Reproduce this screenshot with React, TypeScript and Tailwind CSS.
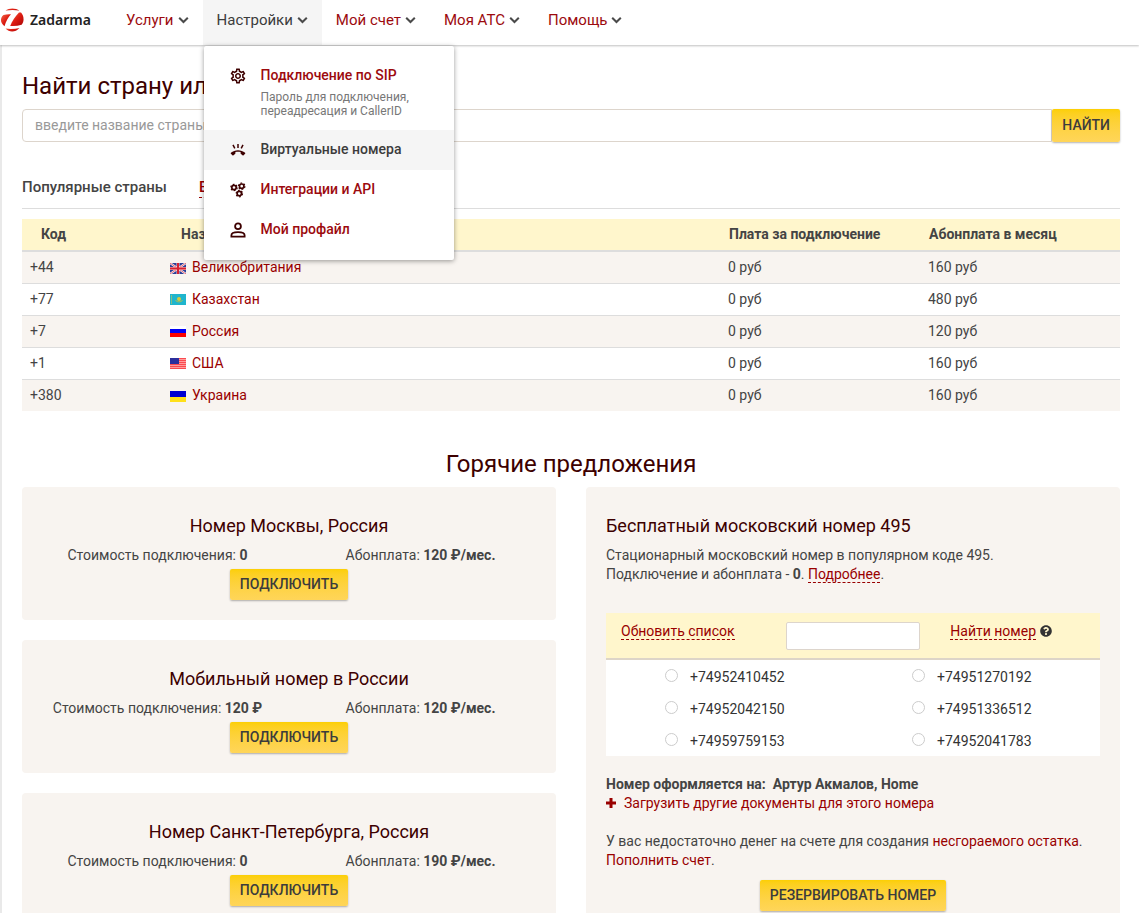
import { useState, type ReactNode } from "react";
import { FaQuestionCircle } from "react-icons/fa";
import { MdOutlineSettings } from "react-icons/md";

const NAV = ["Услуги", "Настройки", "Мой счет", "Моя АТС", "Помощь"];

const COUNTRIES = [
  { code: "+44", flag: "gb", name: "Великобритания", setup: "0 руб", monthly: "160 руб" },
  { code: "+77", flag: "kz", name: "Казахстан", setup: "0 руб", monthly: "480 руб" },
  { code: "+7", flag: "ru", name: "Россия", setup: "0 руб", monthly: "120 руб" },
  { code: "+1", flag: "us", name: "США", setup: "0 руб", monthly: "160 руб" },
  { code: "+380", flag: "ua", name: "Украина", setup: "0 руб", monthly: "160 руб" },
];

const OFFERS = [
  { title: "Номер Москвы, Россия", setup: "0", monthly: "120 ₽/мес." },
  { title: "Мобильный номер в России", setup: "120 ₽", monthly: "120 ₽/мес." },
  { title: "Номер Санкт-Петербурга, Россия", setup: "0", monthly: "190 ₽/мес." },
];

const NUMBERS = [
  "+74952410452",
  "+74951270192",
  "+74952042150",
  "+74951336512",
  "+74959759153",
  "+74952041783",
];

function Logo() {
  return (
    <svg viewBox="0 0 24 24" className="h-6 w-6 shrink-0" aria-hidden="true">
      <defs>
        <linearGradient id="logo-red" x1="0" y1="0" x2="1" y2="1">
          <stop offset="0" stopColor="#f4694a" />
          <stop offset="0.5" stopColor="#dd1c12" />
          <stop offset="1" stopColor="#a80505" />
        </linearGradient>
      </defs>
      <path d="M5.5 2.600C9-.2 15.500-.2 19.500 2.600C15 1.800 10 1.800 5.500 2.600Z" fill="url(#logo-red)" />
      <path d="M3.500 7C6 6.200 8.500 6 11 6.200C8.500 9 6 13 4.500 18.200C.2 15-.2 10 3.500 7Z" fill="url(#logo-red)" />
      <path d="M19 4.400C15.500 8 12 13 10.200 17.900C14 18.300 18 17.900 21.600 16.800C24.500 13 24 8 21 4.600Z" fill="url(#logo-red)" />
      <path d="M5.500 20.600C10.500 21.300 15 21 19.500 19.900C15.500 24.400 9.500 24.600 5.500 20.600Z" fill="url(#logo-red)" />
    </svg>
  );
}

function Chevron() {
  return (
    <svg viewBox="0 0 11 8" className="h-2 w-[11px]" fill="none" aria-hidden="true">
      <path d="M1.200 1.700L5.500 6L9.800 1.700" stroke="#4a4a4a" strokeWidth="2" />
    </svg>
  );
}

function RingIcon() {
  return (
    <svg viewBox="0 0 18 18" className="h-[18px] w-[18px]" aria-hidden="true">
      <path
        d="M9 9.200C6.300 9.200 3.900 10 1.900 11.800C1.600 12.100 1.600 12.500 1.900 12.800L3.400 14.300C3.700 14.600 4.100 14.600 4.500 14.300L6 13.100C6.300 12.900 6.400 12.600 6.400 12.200V11.100C8.100 10.600 9.900 10.600 11.600 11.100V12.200C11.600 12.600 11.700 12.900 12 13.100L13.500 14.300C13.900 14.600 14.300 14.600 14.600 14.300L16.100 12.800C16.400 12.500 16.400 12.100 16.100 11.800C14.100 10 11.700 9.200 9 9.200Z"
        fill="#3d0000"
      />
      <path d="M9 3V7M4 3.800L5.800 7.300M14 3.800L12.200 7.300" stroke="#3d0000" strokeWidth="1.500" />
    </svg>
  );
}

function GearsIcon() {
  const gears = [
    [5, 6.500],
    [12.700, 5.200],
    [10.300, 12.600],
  ];
  return (
    <svg viewBox="0 0 18 18" className="h-[18px] w-[18px]" fill="none" aria-hidden="true">
      {gears.map(([x, y]) => (
        <g key={x} stroke="#3d0000">
          <circle cx={x} cy={y} r="2.200" strokeWidth="1.700" />
          <circle cx={x} cy={y} r="3.200" strokeWidth="1.200" strokeDasharray="1.700 1.650" />
        </g>
      ))}
    </svg>
  );
}

function PersonIcon() {
  return (
    <svg viewBox="0 0 18 18" className="h-[18px] w-[18px]" fill="none" stroke="#3d0000" strokeWidth="1.800" aria-hidden="true">
      <circle cx="9" cy="5.200" r="2.900" />
      <path d="M2.400 15.600V14.200C2.400 12 6 11.100 9 11.100C12 11.100 15.600 12 15.600 14.200V15.600Z" />
    </svg>
  );
}

function Flag({ code }: { code: string }) {
  return (
    <svg viewBox="0 0 16 11" className="mr-1.5 inline-block h-[11px] w-4" aria-hidden="true">
      {code === "gb" && (
        <>
          <rect width="16" height="11" fill="#2b3f98" />
          <path d="M0 0L16 11M16 0L0 11" stroke="#fff" strokeWidth="2" />
          <path d="M0 0L16 11M16 0L0 11" stroke="#d8202f" strokeWidth="0.700" />
          <path d="M8 0V11M0 5.500H16" stroke="#f3c9cf" strokeWidth="3" />
          <path d="M8 0V11M0 5.500H16" stroke="#d8202f" strokeWidth="2" />
        </>
      )}
      {code === "kz" && (
        <>
          <rect width="16" height="11" fill="#1fb5cd" />
          <path d="M1.500 1V10" stroke="#7fbf8a" />
          <circle cx="9" cy="5" r="2" fill="#d8c93a" />
          <path d="M5.500 6C6.500 8.500 11.500 8.500 12.500 6" stroke="#a9bf55" fill="none" />
        </>
      )}
      {code === "ru" && (
        <>
          <rect width="16" height="4" fill="#fff" />
          <rect y="3" width="16" height="4" fill="#0000f5" />
          <rect y="7" width="16" height="4" fill="#fb0000" />
        </>
      )}
      {code === "us" && (
        <>
          <rect width="16" height="11" fill="#ff9c9c" />
          <path d="M0 .5H16M0 2.500H16M0 4.500H16M0 6.500H16M0 8.500H16M0 10.500H16" stroke="#fb4a4f" />
          <rect width="9" height="6" fill="#2c2f9c" />
        </>
      )}
      {code === "ua" && (
        <>
          <rect width="16" height="6" fill="#0000d0" />
          <rect y="6" width="16" height="5" fill="#ffe01a" />
        </>
      )}
    </svg>
  );
}

function YellowButton({ children }: { children: ReactNode }) {
  return (
    <button
      type="button"
      className="min-h-[31px] rounded-xs bg-linear-to-b from-[#fccf03] to-[#ffd559] px-2.5 pb-0.5 text-sm font-medium text-[#3c3c3c] uppercase shadow-[0_1px_2px_rgba(0,0,0,0.3)]"
    >
      {children}
    </button>
  );
}

function MenuItem({
  icon,
  title,
  note,
  active = false,
}: {
  icon: ReactNode;
  title: string;
  note?: string;
  active?: boolean;
}) {
  return (
    <a
      href="#"
      className={`flex gap-3.5 py-2.5 pr-6 pl-[25px] ${active ? "bg-[#f5f5f5] text-[#3c3c3c]" : "text-[#9c0a0e]"}`}
    >
      <span className="flex h-5 w-[18px] shrink-0 items-center text-lg text-[#3d0000]">{icon}</span>
      <span>
        <span className="block text-sm leading-[18px] font-medium">{title}</span>
        {note && <span className="mt-1.5 block pb-0.5 text-xs leading-[14px] text-[#777]">{note}</span>}
      </span>
    </a>
  );
}

function SettingsMenu() {
  return (
    <div className="absolute top-[46px] left-px z-20 w-[250px] rounded-xs bg-white py-2.5 shadow-[0_1px_5px_rgba(0,0,0,0.4)]">
      <MenuItem
        icon={<MdOutlineSettings />}
        title="Подключение по SIP"
        note="Пароль для подключения, переадресация и CallerID"
      />
      <MenuItem icon={<RingIcon />} title="Виртуальные номера" active />
      <MenuItem icon={<GearsIcon />} title="Интеграции и API" />
      <MenuItem icon={<PersonIcon />} title="Мой профайл" />
    </div>
  );
}

function Header() {
  const [open, setOpen] = useState("Настройки");

  return (
    <header className="relative z-10 flex h-[45px] bg-white shadow-[0_1px_2px_rgba(0,0,0,0.25)]">
      <a
        href="#"
        className="flex h-10 w-28 items-center gap-1.5 font-['Noto_Sans',sans-serif] text-sm font-semibold text-[#222]"
      >
        <Logo />
        Zadarma
      </a>
      <nav className="flex">
        {NAV.map((item) => (
          <div key={item} className="relative">
            <button
              type="button"
              onClick={() => setOpen(open === item ? "" : item)}
              className={`flex h-full items-center gap-1 px-3.5 pb-[5px] text-[15px] ${
                open === item ? "bg-[#f5f5f5] text-[#3c3c3c]" : "text-[#9c0a0e]"
              }`}
            >
              {item}
              <Chevron />
            </button>
            {item === "Настройки" && open === item && <SettingsMenu />}
          </div>
        ))}
      </nav>
    </header>
  );
}

function CountryTable() {
  return (
    <table className="mt-2.5 w-full table-fixed text-left">
      <thead className="border-b-2 border-[#ddd] bg-[#fff6cc]">
        <tr className="h-8">
          <th className="w-[140px] pl-[19px]">Код</th>
          <th className="pl-[19px]">Название</th>
          <th className="w-[200px] pl-[9px]">Плата за подключение</th>
          <th className="w-[200px] pl-[9px]">Абонплата в месяц</th>
        </tr>
      </thead>
      <tbody>
        {COUNTRIES.map((c) => (
          <tr key={c.code} className="h-8 border-b border-[#ddd] last:border-0 odd:bg-[#f8f4f0]">
            <td className="pl-2">{c.code}</td>
            <td className="pl-2">
              <Flag code={c.flag} />
              <a href="#" className="text-[#900]">
                {c.name}
              </a>
            </td>
            <td className="pl-2">{c.setup}</td>
            <td className="pl-2">{c.monthly}</td>
          </tr>
        ))}
      </tbody>
    </table>
  );
}

function FreeNumber() {
  const [picked, setPicked] = useState("");

  return (
    <section className="rounded bg-[#f8f4f0] px-5 pt-[29px] pb-4">
      <h3 className="text-lg leading-5 text-[#3d0000]">Бесплатный московский номер 495</h3>
      <p className="mt-2.5">
        Стационарный московский номер в популярном коде 495.
        <br />
        Подключение и абонплата - <b>0</b>.{" "}
        <a href="#" className="border-b border-dashed border-[#900] text-[#900]">
          Подробнее
        </a>
        .
      </p>

      <div className="mt-[29px] grid h-[47px] grid-cols-3 border-b-2 border-[#ddd5c8] bg-[#fff6cc] pt-[9px]">
        <div className="px-[15px]">
          <a href="#" className="border-b border-dashed border-[#900] text-[#900]">
            Обновить список
          </a>
        </div>
        <div className="px-[15px]">
          <input
            type="text"
            aria-label="Номер"
            className="block h-7 w-full rounded-xs border border-[#ddd5cc] bg-white px-2"
          />
        </div>
        <div className="px-[15px] whitespace-nowrap">
          <a href="#" className="border-b border-dashed border-[#900] text-[#900]">
            Найти номер
          </a>
          <FaQuestionCircle className="ml-1 inline-block align-[-1px] text-xs text-[#333]" />
        </div>
      </div>
      <div className="grid grid-cols-2 bg-white">
        {NUMBERS.map((n) => (
          <label key={n} className="flex h-8 items-center pt-0.5 pl-[59px] text-[#333]">
            <input
              type="radio"
              name="number"
              checked={picked === n}
              onChange={() => setPicked(n)}
              className="mr-3 mb-1 h-[13px] w-[13px] appearance-none rounded-full border border-[#ccc] bg-white checked:border-4 checked:border-[#900]"
            />
            {n}
          </label>
        ))}
      </div>

      <p className="mt-[19px] font-bold">Номер оформляется на:&nbsp; Артур Акмалов, Home</p>
      <a href="#" className="flex items-center gap-1.5 text-[#900]">
        <svg viewBox="0 0 12 12" className="h-3 w-3" aria-hidden="true">
          <path d="M5 0V10M0 5H10" stroke="#900" strokeWidth="3" />
        </svg>
        Загрузить другие документы для этого номера
      </a>
      <p className="mt-[19px]">
        У вас недостаточно денег на счете для создания{" "}
        <a href="#" className="text-[#900]">
          несгораемого остатка
        </a>
        .<br />
        <a href="#" className="text-[#900]">
          Пополнить счет
        </a>
        .
      </p>
      <div className="mt-2.5 text-center">
        <YellowButton>Резервировать номер</YellowButton>
      </div>
    </section>
  );
}

export default function App() {
  return (
    <div className="min-h-screen bg-white font-[Roboto,sans-serif] text-sm leading-[19px] text-[#444]">
      <Header />
      <main className="border-l-2 border-[#e9e9e9] pt-7 pr-[19px] pl-5">
        <h1 className="text-2xl leading-[26px] text-[#3d0000]">Найти страну или город</h1>
        <form className="mt-2.5 flex" onSubmit={(e) => e.preventDefault()}>
          <input
            type="text"
            aria-label="Страна или город"
            placeholder="введите название страны или города"
            className="h-[33px] min-w-0 flex-1 rounded-l-sm border border-[#ddd5cc] px-3 pb-0.5 placeholder:text-[#999]"
          />
          <YellowButton>Найти</YellowButton>
        </form>

        <div className="mt-9 flex gap-8 border-b border-[#ddd] pb-2.5 text-[15px] font-medium">
          <span>Популярные страны</span>
          <a href="#" className="border-b border-dashed border-[#900] text-[#900]">
            Все страны
          </a>
        </div>
        <CountryTable />

        <h2 className="mt-10 text-center text-2xl leading-[26px] text-[#3d0000]">Горячие предложения</h2>
        <div className="mt-2.5 grid grid-cols-2 items-start gap-[30px]">
          <div className="flex flex-col gap-5">
            {OFFERS.map((o) => (
              <section key={o.title} className="rounded bg-[#f8f4f0] px-1 pt-[29px] pb-5 text-center">
                <h3 className="text-lg leading-5 text-[#3d0000]">{o.title}</h3>
                <div className="mt-2.5 mb-1 grid grid-cols-2">
                  <span>
                    Стоимость подключения: <b>{o.setup}</b>
                  </span>
                  <span>
                    Абонплата: <b>{o.monthly}</b>
                  </span>
                </div>
                <YellowButton>Подключить</YellowButton>
              </section>
            ))}
          </div>
          <FreeNumber />
        </div>
      </main>
    </div>
  );
}
